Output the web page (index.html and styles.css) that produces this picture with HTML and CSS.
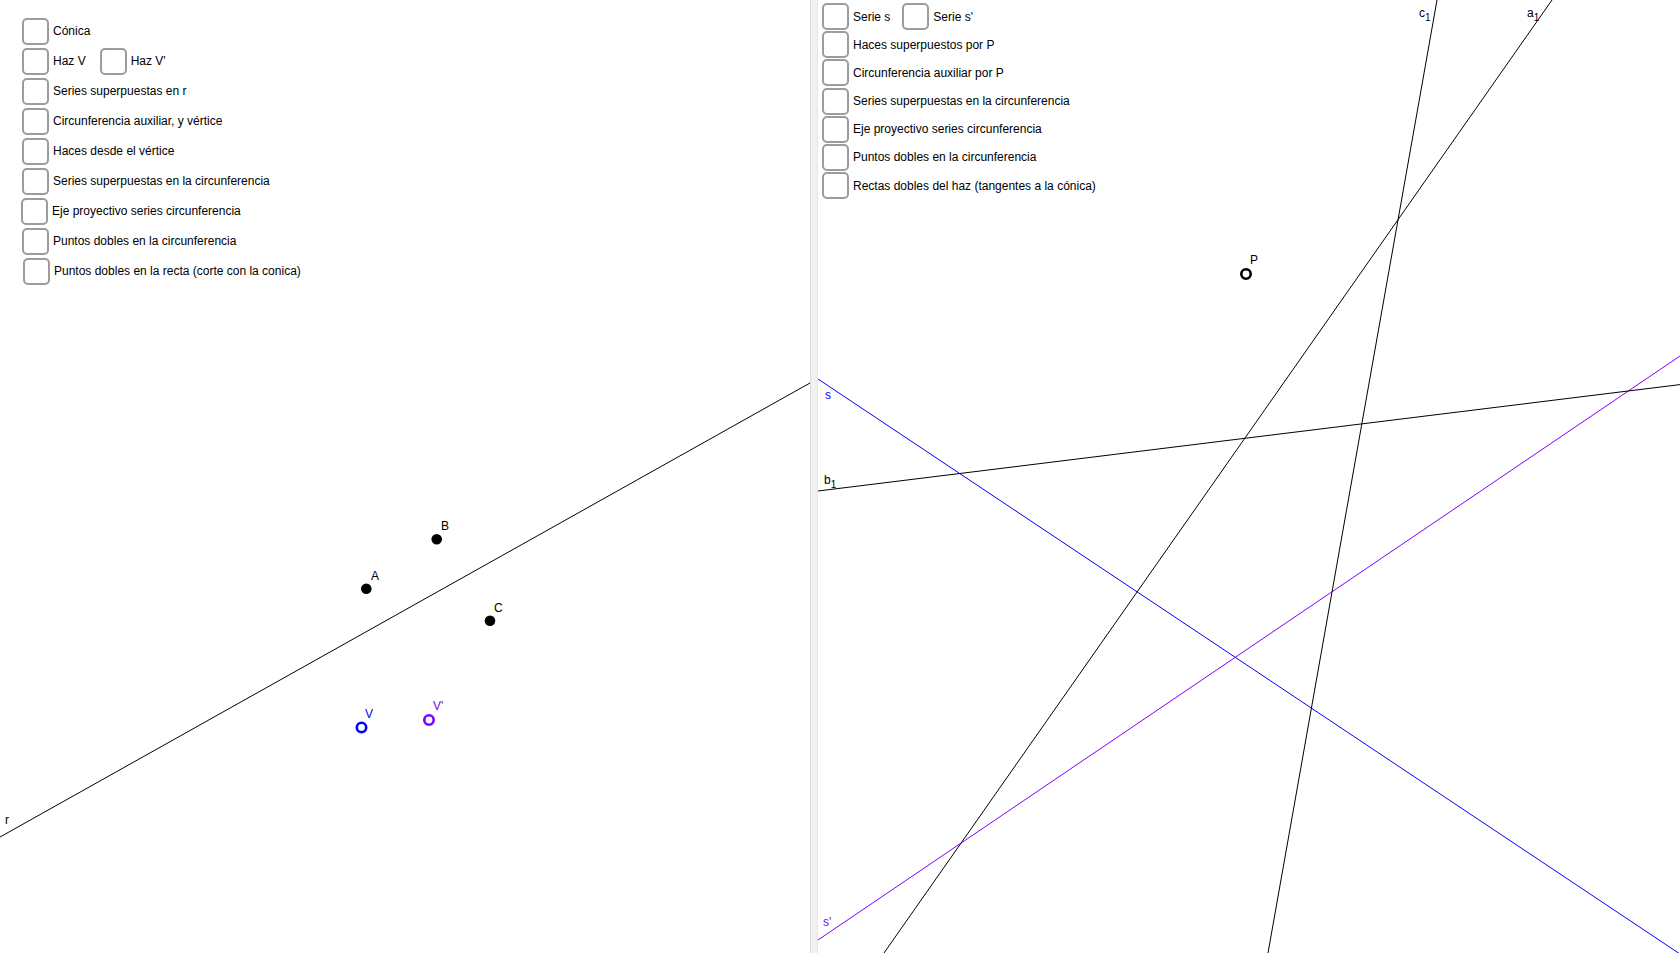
FILE: index.html
```html
<!DOCTYPE html>
<html lang="es">
<head>
<meta charset="utf-8">
<title>Cónica - construcción</title>
<link rel="stylesheet" href="styles.css">
</head>
<body>
<div class="app">
  <section class="panel panel-left">
    <svg class="canvas" width="810" height="953" viewBox="0 0 810 953" xmlns="http://www.w3.org/2000/svg">
      <line x1="0" y1="837" x2="810" y2="383" stroke="#000" stroke-width="1"/>
      <text class="lbl" x="5" y="824">r</text>
      <circle cx="366.3" cy="588.7" r="5.3" fill="#000"/>
      <text class="lbl" x="371" y="580">A</text>
      <circle cx="436.7" cy="539.3" r="5.3" fill="#000"/>
      <text class="lbl" x="441" y="530">B</text>
      <circle cx="490" cy="620.7" r="5.3" fill="#000"/>
      <text class="lbl" x="494" y="612">C</text>
      <circle cx="361.5" cy="727.4" r="4.7" fill="none" stroke="#0000ff" stroke-width="2.6"/>
      <text class="lbl lbl-blue" x="365" y="718">V</text>
      <circle cx="429" cy="720" r="4.7" fill="none" stroke="#7f00ff" stroke-width="2.6"/>
      <text class="lbl lbl-purple" x="433" y="710">V'</text>
    </svg>
    <div class="controls controls-left">
      <label class="row"><span class="box"></span><span class="txt">Cónica</span></label>
      <div class="row">
        <label class="item"><span class="box"></span><span class="txt">Haz V</span></label>
        <label class="item item-next"><span class="box"></span><span class="txt">Haz V'</span></label>
      </div>
      <label class="row"><span class="box"></span><span class="txt">Series superpuestas en r</span></label>
      <label class="row"><span class="box"></span><span class="txt">Circunferencia auxiliar, y vértice</span></label>
      <label class="row"><span class="box"></span><span class="txt">Haces desde el vértice</span></label>
      <label class="row"><span class="box"></span><span class="txt">Series superpuestas en la circunferencia</span></label>
      <label class="row row-shift-l"><span class="box"></span><span class="txt">Eje proyectivo series circunferencia</span></label>
      <label class="row"><span class="box"></span><span class="txt">Puntos dobles en la circunferencia</span></label>
      <label class="row row-shift-r"><span class="box"></span><span class="txt">Puntos dobles en la recta (corte con la conica)</span></label>
    </div>
  </section>
  <div class="splitter"></div>
  <section class="panel panel-right">
    <svg class="canvas" width="862" height="953" viewBox="0 0 862 953" xmlns="http://www.w3.org/2000/svg">
      <line x1="0" y1="379" x2="862" y2="954" stroke="#0000ff" stroke-width="1"/>
      <line x1="0" y1="940" x2="862" y2="356" stroke="#7f00ff" stroke-width="1"/>
      <line x1="0" y1="491" x2="862" y2="384.6" stroke="#000" stroke-width="1"/>
      <line x1="734" y1="0" x2="66" y2="953" stroke="#000" stroke-width="1"/>
      <line x1="619" y1="0" x2="450" y2="953" stroke="#000" stroke-width="1"/>
      <circle cx="428" cy="274" r="4.7" fill="none" stroke="#000" stroke-width="2.6"/>
      <text class="lbl" x="432" y="264">P</text>
      <text class="lbl lbl-blue" x="7" y="399">s</text>
      <text class="lbl lbl-purple" x="5" y="926">s'</text>
      <text class="lbl" x="6" y="484">b<tspan class="sub" dy="4">1</tspan></text>
      <text class="lbl" x="709" y="17">a<tspan class="sub" dy="4">1</tspan></text>
      <text class="lbl" x="601" y="17">c<tspan class="sub" dy="4">1</tspan></text>
    </svg>
    <div class="controls controls-right">
      <div class="row">
        <label class="item"><span class="box"></span><span class="txt">Serie s</span></label>
        <label class="item item-next2"><span class="box"></span><span class="txt">Serie s'</span></label>
      </div>
      <label class="row"><span class="box"></span><span class="txt">Haces superpuestos por P</span></label>
      <label class="row"><span class="box"></span><span class="txt">Circunferencia auxiliar por P</span></label>
      <label class="row"><span class="box"></span><span class="txt">Series superpuestas en la circunferencia</span></label>
      <label class="row"><span class="box"></span><span class="txt">Eje proyectivo series circunferencia</span></label>
      <label class="row"><span class="box"></span><span class="txt">Puntos dobles en la circunferencia</span></label>
      <label class="row"><span class="box"></span><span class="txt">Rectas dobles del haz (tangentes a la cónica)</span></label>
    </div>
  </section>
</div>
</body>
</html>
```
FILE: styles.css
```css
html, body {
  margin: 0;
  padding: 0;
  background: #ffffff;
}

body {
  font-family: "Liberation Sans", Arial, sans-serif;
  font-size: 12px;
  color: #000;
  overflow: hidden;
}

.app {
  display: flex;
  width: 1680px;
  height: 953px;
}

.panel {
  position: relative;
  height: 953px;
  overflow: hidden;
  background: #fff;
}

.panel-left {
  width: 810px;
  flex: none;
}

.panel-right {
  flex: 1;
}

.splitter {
  width: 8px;
  flex: none;
  box-sizing: border-box;
  background: #f1f1f1;
  border-left: 1px solid #dcdcdc;
  border-right: 1px solid #e6e6e6;
}

.canvas {
  position: absolute;
  left: 0;
  top: 0;
  display: block;
}

.lbl {
  font-family: "Liberation Sans", Arial, sans-serif;
  font-size: 12px;
  fill: #000;
}

.lbl-blue { fill: #0000ff; }
.lbl-purple { fill: #7f00ff; }

.sub { font-size: 10px; }

.controls {
  position: relative;
  display: flex;
  flex-direction: column;
  align-items: flex-start;
}

.controls-left {
  padding: 18px 0 0 22px;
  gap: 3.5px;
}

.controls-right {
  padding: 3px 0 0 4px;
  gap: 1.2px;
}

.row,
.item {
  display: flex;
  align-items: center;
}

.box {
  box-sizing: border-box;
  width: 27px;
  height: 27px;
  flex: none;
  border: 2px solid #9c9c9c;
  border-radius: 5px;
  background: #fff;
}

.controls-left .box {
  height: 26.5px;
}

.txt {
  margin-left: 4px;
  line-height: 14px;
  white-space: nowrap;
}

.item-next {
  margin-left: 14px;
}

.item-next2 {
  margin-left: 12px;
}

.row-shift-l {
  margin-left: -1px;
}

.row-shift-r {
  margin-left: 1px;
}
```
